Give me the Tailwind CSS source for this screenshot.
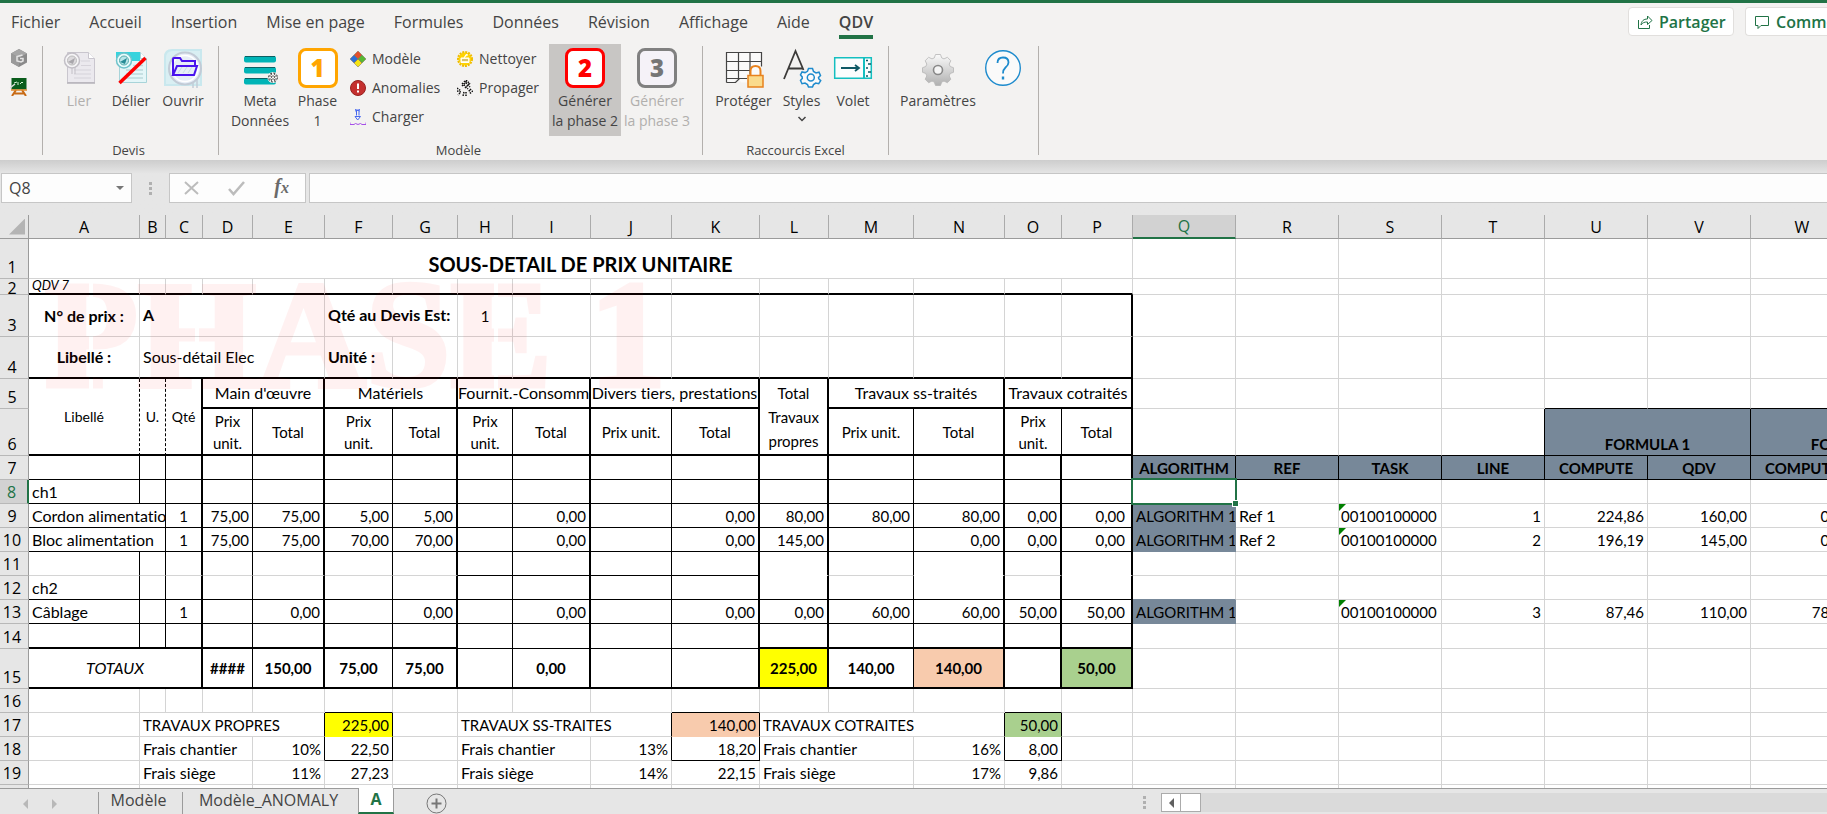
<!DOCTYPE html>
<html lang="fr">
<head>
<meta charset="utf-8">
<title>QDV - Sous-détail de prix unitaire</title>
<script src="https://cdn.jsdelivr.net/npm/@tailwindcss/browser@4"></script>
</head>
<body class="flex h-screen flex-col overflow-hidden bg-[#e6e6e6] font-['Open_Sans','Noto_Sans',sans-serif] text-[#444]">

<header class="shrink-0 border-t-3 border-[#217346] bg-[#f3f2f1]">
  <nav class="flex h-10 overflow-hidden pl-[11px] text-base leading-[38px]" aria-label="Onglets du ruban">
    <div class="flex shrink-0 gap-[29px]">
      <button class="h-9">Fichier</button>
      <button class="h-9">Accueil</button>
      <button class="h-9">Insertion</button>
      <button class="h-9">Mise en page</button>
      <button class="h-9">Formules</button>
      <button class="h-9">Données</button>
      <button class="h-9">Révision</button>
      <button class="h-9">Affichage</button>
      <button class="h-9">Aide</button>
      <button class="relative h-9 font-semibold" aria-current="page">QDV<span class="absolute inset-x-0 bottom-0 h-1 bg-[#217346]"></span></button>
    </div>
    <div class="ml-auto flex gap-[11px] pt-1 font-semibold text-[#217346]">
      <button class="flex h-[29px] w-[106px] items-center gap-1.5 rounded-sm border border-[#e1dfdd] bg-white pl-2">
        <svg class="size-4 shrink-0" viewBox="0 0 16 16" fill="none" stroke="#217346"><path d="M1.500 6v8.500h11V11M4 11c.5-4 2.500-6 6.500-6V2l4.500 4.500-4.500 4V8C7.500 8 5.500 8.500 4 11z"/></svg>
        Partager
      </button>
      <button class="flex h-[29px] w-[82px] items-center gap-1.5 overflow-hidden rounded-l-sm border border-r-0 border-[#e1dfdd] bg-white pl-2">
        <svg class="size-4 shrink-0" viewBox="0 0 16 16" fill="none" stroke="#217346"><path d="M1.500 2.500h13v9H7l-3 3v-3H1.500z"/></svg>
        Commentaires
      </button>
    </div>
  </nav>

  <div class="flex h-[117px] pt-[3px] pb-[5px] text-sm leading-5">
    <section class="flex w-[43px] flex-col gap-[11px] border-r border-[#b3b0ad] pt-[3px] pl-2.5">
      <button aria-label="Hexagone"><svg class="size-[18px]" viewBox="0 0 18 18"><path d="M9 0l8 4.500v9L9 18l-8-4.500v-9z" fill="#8a8a8a"/><path d="M9 0l8 4.500-8 4-8-4z" fill="#a6a6a6"/><path d="M1 4.500l8 4V18l-8-4.500z" fill="#9a9a9a"/><path d="M12.500 6L7 7.500v4.500l4 1 2-1V9.500h-3" fill="none" stroke="#e4e4e4" stroke-width="1.500"/></svg></button>
      <button aria-label="Tableau"><svg class="size-[18px]" viewBox="0 0 18 18"><path d="M6 12l-4 6M12 12l4 6M3 15.500h12" stroke="#c76a15" stroke-width="2"/><path d="M1.500 0h15v11.500h-15z" fill="#0a5d1c"/><path d="M1 12h16" stroke="#e08a2c" stroke-width="1.500"/><path d="M4 5l3-1M8 4v3M10 6l2-2 1 1" stroke="#d8f5d8" fill="none"/><path d="M0 10l5-4" stroke="#ddd" stroke-width="1.500"/></svg></button>
    </section>

    <section class="flex w-[176px] flex-col border-r border-[#b3b0ad]">
      <div class="flex flex-1 pt-0.5 pl-2.5">
        <button class="flex w-[52px] flex-col items-center text-[#b1afad]" disabled>
          <svg class="size-10" viewBox="0 0 40 40"><path d="M8.500 4.500h21l6 6v24h-27z" fill="#ebe9ee" stroke="#c9c6ce"/><path d="M29.500 4.500v6h6" fill="#fff" stroke="#c9c6ce"/><path d="M8 35h28" stroke="#b5b2b9" stroke-width="1.500"/><path d="M22 13h9M22 17.500h10M15 22h17M15 26h17M15 30h17" stroke="#d6d3da" stroke-width="1.200"/><circle cx="13" cy="12.500" r="7.500" fill="#f5f4f6" stroke="#c2bfc6" stroke-width="1.500"/><circle cx="13" cy="12.500" r="4.500" fill="#dcdadd" stroke="#bbb"/><path d="M9 14l7-4-2 6" fill="#a9a7ac"/><path d="M13 20v6M16 19v7" stroke="#c2bfc6"/></svg>
          <span class="mt-[3px]">Lier</span>
        </button>
        <button class="flex w-[52px] flex-col items-center">
          <svg class="size-10" viewBox="0 0 40 40"><path d="M8.500 4.500h21l6 6v24h-27z" fill="#e4f6f8" stroke="#a8d4d9"/><path d="M5 4h24v9H5z" fill="#37d3dd"/><path d="M29.500 4.500v6h6" fill="#fff" stroke="#a8d4d9"/><path d="M22 17.500h10M15 22h17M15 26h17M15 30h17" stroke="#bcd9dc" stroke-width="1.500"/><circle cx="13" cy="12.500" r="7.500" fill="#e8fbfc" stroke="#6fc3cb" stroke-width="1.500"/><circle cx="13" cy="12.500" r="4.500" fill="#b8e6ea" stroke="#5aa"/><path d="M9 14l7-4-2 6" fill="#278b95"/><path d="M8.500 35l26-25" stroke="#f00" stroke-width="3.500"/></svg>
          <span class="mt-[3px]">Délier</span>
        </button>
        <button class="flex w-[52px] flex-col items-center">
          <svg class="size-10" viewBox="0 0 40 40"><path d="M1 38V9q0-8 8-8h30v37z" fill="#c9e8ee"/><path d="M3 36V10q0-7 7-7h27v33z" fill="#d9eff3"/><circle cx="22" cy="20.500" r="16" fill="#e7edf7" stroke="#c2cbd6" stroke-width="2"/><circle cx="22" cy="20.500" r="13" fill="none" stroke="#fff" stroke-width="1.500"/><path d="M30 34v6M34 31v9" stroke="#c2cbd6" stroke-width="1.500"/><path d="M10 27V11q0-1 1-1h6l2 3h13v4M10 27l4-9h20l-3 9z" fill="none" stroke="#4a12ee" stroke-width="2"/><path d="M15 25l4-6M20 25l4-6M25 25l4-6" stroke="#c6dfe4"/></svg>
          <span class="mt-[3px]">Ouvrir</span>
        </button>
      </div>
      <h2 class="-mb-[5px] pr-1 text-center text-[13px] leading-5">Devis</h2>
    </section>

    <section class="flex w-[484px] flex-col border-r border-[#b3b0ad]">
      <div class="flex flex-1 pl-[9px]">
        <button class="flex w-[64px] flex-col items-center pt-0.5">
          <svg class="size-10" viewBox="0 0 40 40"><g fill="#00b4b6"><rect x="4" y="8" width="32" height="6.500" rx="2"/><rect x="4" y="19" width="32" height="6.500" rx="2"/><rect x="4" y="30" width="32" height="6.500" rx="2"/></g><path d="M5 8.500h30M5 19.500h30M5 30.500h30" stroke="#0b6063"/><circle cx="33" cy="29.500" r="5.500" fill="#f3f2f1"/><circle cx="33" cy="29.500" r="4.500" fill="none" stroke="#333" stroke-dasharray="2 1.500"/><path d="M29 28h8M29 31h8M31.500 25v9M34.500 25v9" stroke="#444" stroke-width=".8" stroke-dasharray="2 1"/></svg>
          <span class="mt-[3px]">Meta<br>Données</span>
        </button>
        <button class="flex w-[51px] flex-col items-center pt-0.5">
          <span class="flex size-10 items-center justify-center rounded-lg border-3 border-[#ffa500] bg-white text-2xl font-extrabold text-[#ffa500]">1</span>
          <span class="mt-[3px]">Phase<br>1</span>
        </button>
        <div class="flex w-[107px] flex-col gap-[5px] pt-px pl-[7px]">
          <button class="flex h-6 items-center gap-1.5"><svg class="size-4 shrink-0" viewBox="0 0 16 16"><path d="M8 0l4 4-4 4-4-4z" fill="#e2502c"/><path d="M4 4l4 4-4 4-4-4z" fill="#2d6fd6"/><path d="M12 4l4 4-4 4-4-4z" fill="#57b733"/><path d="M8 8l4 4-4 4-4-4z" fill="#f5e414"/><path d="M8 0l4 4-4 4-4-4zM4 4l4 4-4 4-4-4zM12 4l4 4-4 4-4-4zM8 8l4 4-4 4-4-4z" fill="none" stroke="#7a6a55" stroke-width=".5"/></svg>Modèle</button>
          <button class="flex h-6 items-center gap-1.5"><svg class="size-4 shrink-0" viewBox="0 0 16 16"><circle cx="8" cy="8" r="7.500" fill="#c4302f" stroke="#97211f"/><path d="M8 3.500v5.500M8 10.500v2" stroke="#fff" stroke-width="2"/></svg>Anomalies</button>
          <button class="flex h-6 items-center gap-1.5"><svg class="size-4 shrink-0" viewBox="0 0 16 16" fill="none"><path d="M5 .5l5 1.500M10 .5L5 2M6.500 2v4.500M9 2v4.500M5 7.500h5.500L7.700 11z" stroke="#4668ef"/><path d="M0 13.500v2h4l1.500-1 2.500 1 2.500-1 1.500 1h4v-2" stroke="#a64fe8"/></svg>Charger</button>
        </div>
        <div class="flex w-[99px] flex-col gap-[5px] pt-px pl-[7px]">
          <button class="flex h-6 items-center gap-1.5"><svg class="size-4 shrink-0" viewBox="0 0 16 16"><circle cx="8" cy="8" r="6.500" fill="#ffd400"/><circle cx="8" cy="8" r="7" fill="none" stroke="#f0bd00" stroke-width="2" stroke-dasharray="2 1"/><path d="M4 7h8v4.500H4zM7 7l2-3.500 2 .5" fill="#fff8cf" stroke="#fff"/><path d="M5 9h6" stroke="#b28a00"/></svg>Nettoyer</button>
          <button class="flex h-6 items-center gap-1.5"><svg class="size-4 shrink-0" viewBox="0 0 16 16" fill="none" stroke="#111" stroke-dasharray="1.500 1"><path d="M7 1l6 6M5 3l6 6M9 0l4 4M8 8l5-5M5 6l5-5M0 8l4 3M0 11l4 1M3 13l-2 2M7 12l-1 4M9 12v4M12 10l2 4M13 9l3 3" stroke-width="1.500"/></svg>Propager</button>
        </div>
        <button class="-mt-0.5 flex h-[92px] w-[72px] flex-col items-center bg-[#c8c6c4] pt-1 whitespace-nowrap">
          <span class="flex size-10 items-center justify-center rounded-lg border-3 border-[#f00] bg-white text-2xl font-extrabold text-[#f00]">2</span>
          <span class="mt-[3px]">Générer<br>la phase 2</span>
        </button>
        <button class="-mt-0.5 flex h-[92px] w-[72px] flex-col items-center pt-1 whitespace-nowrap text-[#b1afad]" disabled>
          <span class="flex size-10 items-center justify-center rounded-lg border-3 border-[#808080] bg-[#f5f2f8] text-2xl font-extrabold text-[#767676]">3</span>
          <span class="mt-[3px]">Générer<br>la phase 3</span>
        </button>
      </div>
      <h2 class="-mb-[5px] pr-1 text-center text-[13px] leading-5">Modèle</h2>
    </section>

    <section class="flex w-[186px] flex-col border-r border-[#b3b0ad]">
      <div class="flex flex-1 pt-0.5 pl-[11px]">
        <button class="flex w-[59px] flex-col items-center">
          <svg class="size-10" viewBox="0 0 40 40"><path d="M2.500 4.500h35v30h-20l-5-5-3 5h-7z" fill="#fafafa"/><path d="M2.500 34.500v-30h35v14M2.500 13.500h35M2.500 22.500h24M14.500 4.500v26M26 4.500v22M2.500 30.500h21M2.500 34.500h9l4-4" fill="none" stroke="#444" stroke-width="1.200"/><path d="M23 27h17v13H23z" fill="#f3f2f1"/><path d="M26.500 27v-4q0-5 5-5t5 5v4" fill="none" stroke="#e8821e" stroke-width="2"/><path d="M24 27.500h15v11.500H24z" fill="#fadb8c" stroke="#e8821e" stroke-width="1.500"/></svg>
          <span class="mt-[3px]">Protéger</span>
        </button>
        <button class="flex w-[57px] flex-col items-center">
          <svg class="size-10" viewBox="0 0 40 40" fill="none"><path d="M2 31L13.500 3l8 19M6.500 20.500h14" stroke="#3b3a39" stroke-width="1.800"/><path d="M26.500 20.500h4l1 3 2.500 1.400 3-.7 1.500 3.300-2 2 .2 1.200 2 2-2 3-3-.6-2.200 1.500-1 2.400h-4l-1-2.400-2.500-1.500-3 .6-1.500-3.200 1.800-2-.1-1.600-1.700-2 1.500-3 3 .7 2.500-1.300z" fill="#fafafa" stroke="#1e8bcd" stroke-width="1.500"/><circle cx="28.800" cy="29.500" r="3.500" stroke="#1e8bcd" stroke-width="1.500"/></svg>
          <span class="mt-[3px]">Styles</span>
          <svg class="mt-1 h-2 w-2.5" viewBox="0 0 10 8" fill="none" stroke="#444" stroke-width="1.500"><path d="M1.500 2L5 5.500 8.500 2"/></svg>
        </button>
        <button class="flex w-[46px] flex-col items-center">
          <svg class="size-10" viewBox="0 0 40 40" fill="none"><path d="M1.700 9.700h36.600v20.600H1.700z" fill="#fbfdfd" stroke="#14bfc0" stroke-width="1.500"/><path d="M31 9.500v21" stroke="#14bfc0" stroke-width="2"/><path d="M8 20h18M22 17l4 3-4 3" stroke="#0d5965" stroke-width="1.800"/><path d="M33 12.500h2M35 16h3M33 20h2M35 24h3M33 28h2" stroke="#0d5965" stroke-width="1.500"/></svg>
          <span class="mt-[3px]">Volet</span>
        </button>
      </div>
      <h2 class="-mb-[5px] text-center text-[13px] leading-5">Raccourcis Excel</h2>
    </section>

    <section class="flex w-[150px] border-r border-[#b3b0ad] pt-0.5 pl-2.5">
      <button class="flex w-[78px] flex-col items-center">
        <svg class="size-10" viewBox="0 0 40 40"><defs><linearGradient id="gear" x1="0" y1="0" x2="0" y2="1"><stop offset="0" stop-color="#fafafa"/><stop offset="1" stop-color="#b0b0b0"/></linearGradient></defs><path d="M17.500 6.500h5l1.200 3.400 2.300 1 3.400-1.600 3.400 3.400-1.600 3.400 1 2.400 3.300 1.200v4.600l-3.300 1.200-1 2.400 1.600 3.400-3.400 3.400-3.400-1.600-2.300 1-1.200 3.400h-5l-1.200-3.400-2.300-1-3.400 1.600-3.400-3.400 1.600-3.400-1-2.400-3.300-1.200v-4.600l3.300-1.200 1-2.400-1.600-3.400 3.400-3.400 3.400 1.600 2.300-1z" fill="url(#gear)" stroke="#b5b5b5" stroke-width=".8" stroke-linejoin="round"/><circle cx="20" cy="22" r="4.500" fill="#f5f5f5" stroke="#888" stroke-width="1.600"/></svg>
        <span class="mt-[3px]">Paramètres</span>
      </button>
      <button class="flex w-[52px] flex-col items-center" aria-label="Aide">
        <svg class="size-10" viewBox="0 0 40 40" fill="none" stroke="#1e8bcd"><circle cx="20" cy="20" r="17.300" fill="#fafafa" stroke-width="1.400"/><path d="M14.500 15q0-5.500 5.500-5.500t5.500 5q0 2.500-3 5-2.500 2.200-2.500 6" stroke-width="1.800"/><path d="M20 28.500v3" stroke-width="2.400"/></svg>
      </button>
    </section>
  </div>
</header>

<div class="flex h-[55px] shrink-0 items-start bg-linear-to-b from-[#cdcdcd] via-[#e6e6e6] via-25% to-[#e6e6e6] pt-[13px] pl-px">
  <div class="flex h-[30px] w-[131px] items-center border border-[#c6c6c6] bg-[#fdfdfd] px-[7px]">
    <input class="w-full min-w-0 bg-transparent text-base outline-none" aria-label="Zone Nom" value="Q8">
    <svg class="h-1 w-2 shrink-0" viewBox="0 0 8 4"><path d="M0 0h8L4 4z" fill="#777"/></svg>
  </div>
  <div class="flex h-[30px] w-[37px] flex-col items-center justify-center gap-0.5" aria-hidden="true"><i class="size-[3px] bg-[#b0b0b0]"></i><i class="size-[3px] bg-[#b0b0b0]"></i><i class="size-[3px] bg-[#b0b0b0]"></i></div>
  <div class="flex h-[30px] w-[137px] items-center justify-between border border-[#c6c6c6] bg-[#fdfdfd] px-3.5">
    <button aria-label="Annuler"><svg class="size-4" viewBox="0 0 16 16"><path d="M1 2l13 12M14 2L1 14" stroke="#bcbcbc" stroke-width="2"/></svg></button>
    <button aria-label="Entrer"><svg class="h-4 w-[18px]" viewBox="0 0 18 16"><path d="M1 9l4.500 5L16 2" fill="none" stroke="#bcbcbc" stroke-width="2.500"/></svg></button>
    <button class="pr-0.5 font-['Liberation_Serif',serif] text-xl leading-5 font-bold text-[#6a6a6a] italic" aria-label="Insérer une fonction">f<span class="text-base">x</span></button>
  </div>
  <input class="ml-[3px] h-[30px] min-w-0 flex-1 border border-r-0 border-[#c6c6c6] bg-[#fdfdfd] px-2 outline-none" aria-label="Barre de formule">
</div>

<main class="relative min-h-0 flex-1 overflow-hidden bg-white">
  <table class="w-[1957px] table-fixed border-separate border-spacing-0 font-['Lato',sans-serif] text-[15px] leading-5 text-black [font-variant-ligatures:none]">
    <colgroup>
      <col class="w-[29px]"><col class="w-[111px]"><col class="w-[26px]"><col class="w-[37px]"><col class="w-[50px]"><col class="w-[72px]"><col class="w-[68px]"><col class="w-[65px]"><col class="w-[55px]"><col class="w-[78px]"><col class="w-[81px]"><col class="w-[88px]"><col class="w-[69px]"><col class="w-[85px]"><col class="w-[91px]"><col class="w-[57px]"><col class="w-[71px]"><col class="w-[103px]"><col class="w-[103px]"><col class="w-[103px]"><col class="w-[103px]"><col class="w-[103px]"><col class="w-[103px]"><col class="w-[103px]"><col class="w-[103px]">
    </colgroup>
    <thead><tr id="letters" class="h-6"></tr></thead>
    <tbody id="grid"></tbody>
  </table>
  <!-- Stencil watermark: the mask cuts the bridges of P, H and E -->
  <div class="pointer-events-none absolute top-[45px] left-[45px] font-['Liberation_Serif',serif] text-[152px] leading-[150px] font-bold whitespace-nowrap text-[#f00] opacity-5 [-webkit-text-stroke:5px_#f00] [mask-image:linear-gradient(to_right,#000_44px,transparent_44px,transparent_48px,#000_48px,#000_150px,transparent_150px,transparent_154px,#000_154px,#000_449px,transparent_449px,transparent_453px,#000_453px)]" aria-hidden="true">PHASE 1</div>
</main>

<footer class="flex h-[26px] shrink-0 border-t border-[#9b9b9b] text-base leading-5">
  <div class="flex w-[98px] items-center gap-6 pt-1 pl-[23px]">
    <button aria-label="Feuille précédente"><svg class="h-2.5 w-[5px]" viewBox="0 0 5 10"><path d="M5 0v10L0 5z" fill="#b8b8b8"/></svg></button>
    <button aria-label="Feuille suivante"><svg class="h-2.5 w-[5px]" viewBox="0 0 5 10"><path d="M0 0v10l5-5z" fill="#b8b8b8"/></svg></button>
  </div>
  <div class="mt-[3px] flex w-[84px] items-start border-l border-[#9b9b9b]"><button class="-mt-0.5 w-full pr-1">Modèle</button></div>
  <div class="mt-[3px] flex w-[176px] items-start border-l border-[#9b9b9b]"><button class="-mt-0.5 w-full pr-1">Modèle_ANOMALY</button></div>
  <button class="-mt-px w-[36px] border-x border-b-2 border-x-[#9b9b9b] border-b-[#217346] bg-white pb-0.5 font-bold text-[#217346]" aria-current="page">A</button>
  <button class="mt-1 ml-8" aria-label="Nouvelle feuille"><svg class="size-[21px]" viewBox="0 0 21 21" fill="none" stroke="#777"><circle cx="10.500" cy="10.500" r="9.500"/><path d="M5.500 10.500h10M10.500 5.500v10" stroke-width="2"/></svg></button>
  <div class="ml-auto flex w-[684px] pt-1">
    <div class="flex h-5 w-[18px] flex-col gap-0.5 pt-[3px]" aria-hidden="true"><i class="size-[3px] bg-[#b0b0b0]"></i><i class="size-[3px] bg-[#b0b0b0]"></i><i class="size-[3px] bg-[#b0b0b0]"></i></div>
    <div class="flex h-[19px] flex-1 bg-[#dadada]">
      <button class="flex w-5 items-center justify-center border border-[#ababab] bg-white" aria-label="Défiler à gauche"><svg class="h-2.5 w-[5px]" viewBox="0 0 5 10"><path d="M5 0v10L0 5z" fill="#606060"/></svg></button>
      <div class="-ml-px w-[21px] border border-[#ababab] bg-white"></div>
    </div>
  </div>
</footer>

<script>
const LETTERS = 'ABCDEFGHIJKLMNOPQRSTUVWX';
// Border codes: g grid line, k thin black, K thick black, d dashed, s/y/o/n cell fill, w white
const RIGHT = {
  g: 'border-r border-r-[#d4d4d4]', k: 'border-r border-r-black', K: 'border-r-2 border-r-black',
  d: 'border-r border-r-black [border-right-style:dashed]', s: 'border-r border-r-[#778899]'
};
const BOTTOM = {
  g: 'border-b border-b-[#d4d4d4]', k: 'border-b border-b-black', K: 'border-b-2 border-b-black', w: 'border-b border-b-white',
  s: 'border-b border-b-[#778899]', y: 'border-b border-b-[#ffff00]', o: 'border-b border-b-[#f8cbad]', n: 'border-b border-b-[#a9d08e]'
};
const FILL = { s: 'bg-[#778899]', y: 'bg-[#ffff00]', o: 'bg-[#f8cbad]', n: 'bg-[#a9d08e]' };
const NUM = 'text-right px-[3px] pb-px', NUMP = 'text-right pr-1.5 pb-px', ONE = 'text-center pb-px';
const CAPS = 'text-left px-[3px] pb-px', TXT = CAPS + ' text-base leading-5', MID = 'text-center align-middle', LABEL = 'text-center align-middle font-bold text-base';
const HEAD = 'text-center font-bold pb-px ' + FILL.s, TOT = 'text-center align-middle font-bold', ALGO = 'text-left pl-[3px] pb-px ' + FILL.s;
const FLAG = '<span class="absolute top-0 left-0 size-[7px] bg-[#008000] [clip-path:polygon(0_0,100%_0,0_100%)]"></span>';
const SELECTION = '<span class="absolute -inset-0.5 z-10 border-2 border-[#217346]"></span><span class="absolute -right-1 -bottom-1 z-10 size-[7px] border border-white bg-[#217346]"></span>';
const T = 'kkKkKkKkKkKKkKKK', G8 = 'gggggggg', G16 = G8 + G8, K16 = 'KKKKKKKKKKKKKKKK', k16 = 'kkkkkkkkkkkkkkkk';
const BOX = 'ggggkkgggkkggkkg';
const task = FLAG + '00100100000', TASK = 'text-left relative pl-0.5 pb-px';
const PU2 = 'Prix<br>unit.', TWO = MID + ' leading-[22px]';

// cells: column letter -> [html, classes, colspan, rowspan]
const ROWS = [
  { h: 40, r: G16 + G8, b: G16 + G8, c: { A: ['SOUS-DETAIL DE PRIX UNITAIRE', 'text-center font-bold text-xl', 16] } },
  { h: 16, r: G16 + G8, b: K16 + G8, c: { A: ['QDV 7', 'italic text-[13px] leading-3 align-top px-[3px]'] } },
  { h: 42, r: 'gggggggggggggggK' + G8, b: G16 + G8, c: { A: ['N° de prix :', LABEL], B: ['A', TXT + ' align-middle font-bold', 4], F: ['Qté au Devis Est:', TXT + ' align-middle font-bold', 2], H: ['1', MID] } },
  { h: 42, r: 'gggggggggggggggK' + G8, b: K16 + G8, c: { A: ['Libellé :', LABEL], B: ['Sous-détail Elec', TXT + ' align-middle', 4], F: ['Unité :', TXT + ' align-middle font-bold'] } },
  { h: 30, r: 'ddKkKkKkKkKKkKKK' + G8, b: K16 + 'ggggkkkk', c: {
    A: ['Libellé', MID + ' text-sm', 1, 2], B: ['U.', MID + ' text-sm', 1, 2], C: ['Qté', MID + ' text-sm', 1, 2],
    D: ["Main d'œuvre", MID + ' text-base', 2], F: ['Matériels', MID + ' text-base', 2], H: ['Fournit.-Consomm', MID + ' text-base', 2], J: ['Divers tiers, prestations', MID + ' text-base', 2],
    L: ['Total<br>Travaux<br>propres', MID + ' leading-6', 1, 2], M: ['Travaux ss-traités', MID + ' text-base', 2], O: ['Travaux cotraités', MID + ' text-base', 2] } },
  { h: 47, r: 'kkKkKkKkKkKKkKkKgggkkkkk', b: K16 + 'kkkkkkkk', skip: 'ABCL', c: {
    D: [PU2, TWO], E: ['Total', MID], F: [PU2, TWO], G: ['Total', MID], H: [PU2, TWO], I: ['Total', MID], J: ['Prix unit.', MID], K: ['Total', MID],
    M: ['Prix unit.', MID], N: ['Total', MID], O: [PU2, TWO], P: ['Total', MID], U: ['FORMULA 1', HEAD, 2], W: ['FORMULA 2', HEAD, 2] } },
  { h: 24, r: T + 'kkkkkkkk', b: k16 + 'kkkkkkkk', c: { Q: ['ALGORITHM', HEAD], R: ['REF', HEAD], S: ['TASK', HEAD], T: ['LINE', HEAD], U: ['COMPUTE', HEAD], V: ['QDV', HEAD], W: ['COMPUTE', HEAD], X: ['QDV', HEAD] } },
  { h: 24, r: T + G8, b: k16 + 'sggggggg', c: { A: ['ch1', TXT], Q: [SELECTION, 'relative overflow-visible'] } },
  { h: 24, r: T + 'sggggggg', b: k16 + 'sggggggg', c: { A: ['Cordon alimentation', TXT, 2], C: ['1', ONE], D: ['75,00', NUM], E: ['75,00', NUM], F: ['5,00', NUM], G: ['5,00', NUM], I: ['0,00', NUM], K: ['0,00', NUM], L: ['80,00', NUM], M: ['80,00', NUM], N: ['80,00', NUM], O: ['0,00', NUM], P: ['0,00', NUMP], Q: ['ALGORITHM 1', ALGO], R: ['Ref 1', TXT], S: [task, TASK], T: ['1', NUM], U: ['224,86', NUM], V: ['160,00', NUM], W: ['0,00', NUM] } },
  { h: 24, r: T + 'sggggggg', b: k16 + 'sggggggg', c: { A: ['Bloc alimentation', TXT, 2], C: ['1', ONE], D: ['75,00', NUM], E: ['75,00', NUM], F: ['70,00', NUM], G: ['70,00', NUM], I: ['0,00', NUM], K: ['0,00', NUM], L: ['145,00', NUM], N: ['0,00', NUM], O: ['0,00', NUM], P: ['0,00', NUMP], Q: ['ALGORITHM 1', ALGO], R: ['Ref 2', TXT], S: [task, TASK], T: ['2', NUM], U: ['196,19', NUM], V: ['145,00', NUM], W: ['0,00', NUM] } },
  { h: 24, r: T + G8, b: 'gggggggkkkkwgwgw' + G8, c: {} },
  { h: 24, r: T + G8, b: k16 + 'sggggggg', c: { A: ['ch2', TXT] } },
  { h: 24, r: T + 'sggggggg', b: k16 + 'sggggggg', c: { A: ['Câblage', TXT], C: ['1', ONE], E: ['0,00', NUM], G: ['0,00', NUM], I: ['0,00', NUM], K: ['0,00', NUM], L: ['0,00', NUM], M: ['60,00', NUM], N: ['60,00', NUM], O: ['50,00', NUM], P: ['50,00', NUMP], Q: ['ALGORITHM 1', ALGO], S: [task, TASK], T: ['3', NUM], U: ['87,46', NUM], V: ['110,00', NUM], W: ['78,00', NUM] } },
  { h: 25, r: T + G8, b: 'KKKKKKKkkkkKKKKK' + G8, c: {} },
  { h: 40, r: T + G8, b: K16 + G8, c: { A: ['TOTAUX', MID + ' text-base italic', 3], D: ['####', TOT], E: ['150,00', TOT], F: ['75,00', TOT], G: ['75,00', TOT], I: ['0,00', TOT], L: ['225,00', TOT + ' ' + FILL.y], M: ['140,00', TOT], N: ['140,00', TOT + ' ' + FILL.o], P: ['50,00', TOT + ' ' + FILL.n] } },
  { h: 24, r: G16 + G8, b: 'gggggkggggkgggkg' + G8, c: {} },
  { h: 24, r: BOX + G8, b: 'gggggyggggogggng' + G8, c: { B: ['TRAVAUX PROPRES', CAPS, 4], F: ['225,00', NUM + ' ' + FILL.y], H: ['TRAVAUX SS-TRAITES', CAPS, 3], K: ['140,00', NUM + ' ' + FILL.o], L: ['TRAVAUX COTRAITES', CAPS, 3], O: ['50,00', NUM + ' ' + FILL.n] } },
  { h: 24, r: BOX + G8, b: 'gggggkggggkgggkg' + G8, c: { B: ['Frais chantier', TXT, 3], E: ['10%', NUM], F: ['22,50', NUM], H: ['Frais chantier', TXT, 2], J: ['13%', NUM], K: ['18,20', NUM], L: ['Frais chantier', TXT, 2], N: ['16%', NUM], O: ['8,00', NUM] } },
  { h: 24, r: G16 + G8, b: G16 + G8, c: { B: ['Frais siège', TXT, 3], E: ['11%', NUM], F: ['27,23', NUM], H: ['Frais siège', TXT, 2], J: ['14%', NUM], K: ['22,15', NUM], L: ['Frais siège', TXT, 2], N: ['17%', NUM], O: ['9,86', NUM] } },
  { h: 24, r: G16 + G8, b: G16 + G8, c: { B: ['', '', 3], H: ['', '', 2], L: ['', '', 2] } }
];

const HEADER_FONT = "font-['Open_Sans','Noto_Sans',sans-serif] text-base font-normal";
document.getElementById('letters').innerHTML =
  '<th class="border-r border-b border-[#9b9b9b] bg-[#e6e6e6] p-0" aria-label="Tout sélectionner"><span class="ml-auto mr-[3px] block size-4 bg-[#b4b4b4] [clip-path:polygon(100%_0,100%_100%,0_100%)]"></span></th>' +
  [...LETTERS].map(l => '<th scope="col" class="p-0 leading-[22px] ' + HEADER_FONT + ' border-r border-r-[#ababab] ' +
    (l === 'Q' ? 'border-b-2 border-b-[#217346] bg-[#d2d2d2] text-[#217346]' : 'border-b border-b-[#9b9b9b] bg-[#e6e6e6]') + '">' + l + '</th>').join('');

document.getElementById('grid').innerHTML = ROWS.map((row, i) => {
  const n = i + 1;
  let html = '<th scope="row" class="overflow-hidden p-0 pr-1 align-bottom ' + HEADER_FONT + ' border-b border-b-[#b8b8b8] ' +
    (n === 8 ? 'border-r-2 border-r-[#217346] bg-[#d2d2d2] text-[#217346]' : 'border-r border-r-[#9b9b9b] bg-[#e6e6e6]') +
    (n === 2 ? ' leading-3' : ' leading-[21px]') + '">' + (n < 20 ? n : '') + '</th>';
  for (let x = 0; x < LETTERS.length;) {
    const letter = LETTERS[x];
    if (row.skip && row.skip.includes(letter)) { x++; continue; }
    const [text, cls, span = 1, rows = 1] = row.c[letter] || ['', ''];
    const vertical = /align-(middle|top)/.test(cls) ? '' : ' align-bottom';
    const clip = cls.includes('overflow-visible') ? '' : ' overflow-hidden';
    html += '<td colspan="' + span + '" rowspan="' + rows + '" class="whitespace-nowrap ' + cls + vertical + clip + ' ' +
      RIGHT[row.r[x + span - 1]] + ' ' + BOTTOM[row.b[x]] + '">' + text + '</td>';
    x += span;
  }
  return '<tr style="height:' + row.h + 'px">' + html + '</tr>';
}).join('');
</script>
</body>
</html>
